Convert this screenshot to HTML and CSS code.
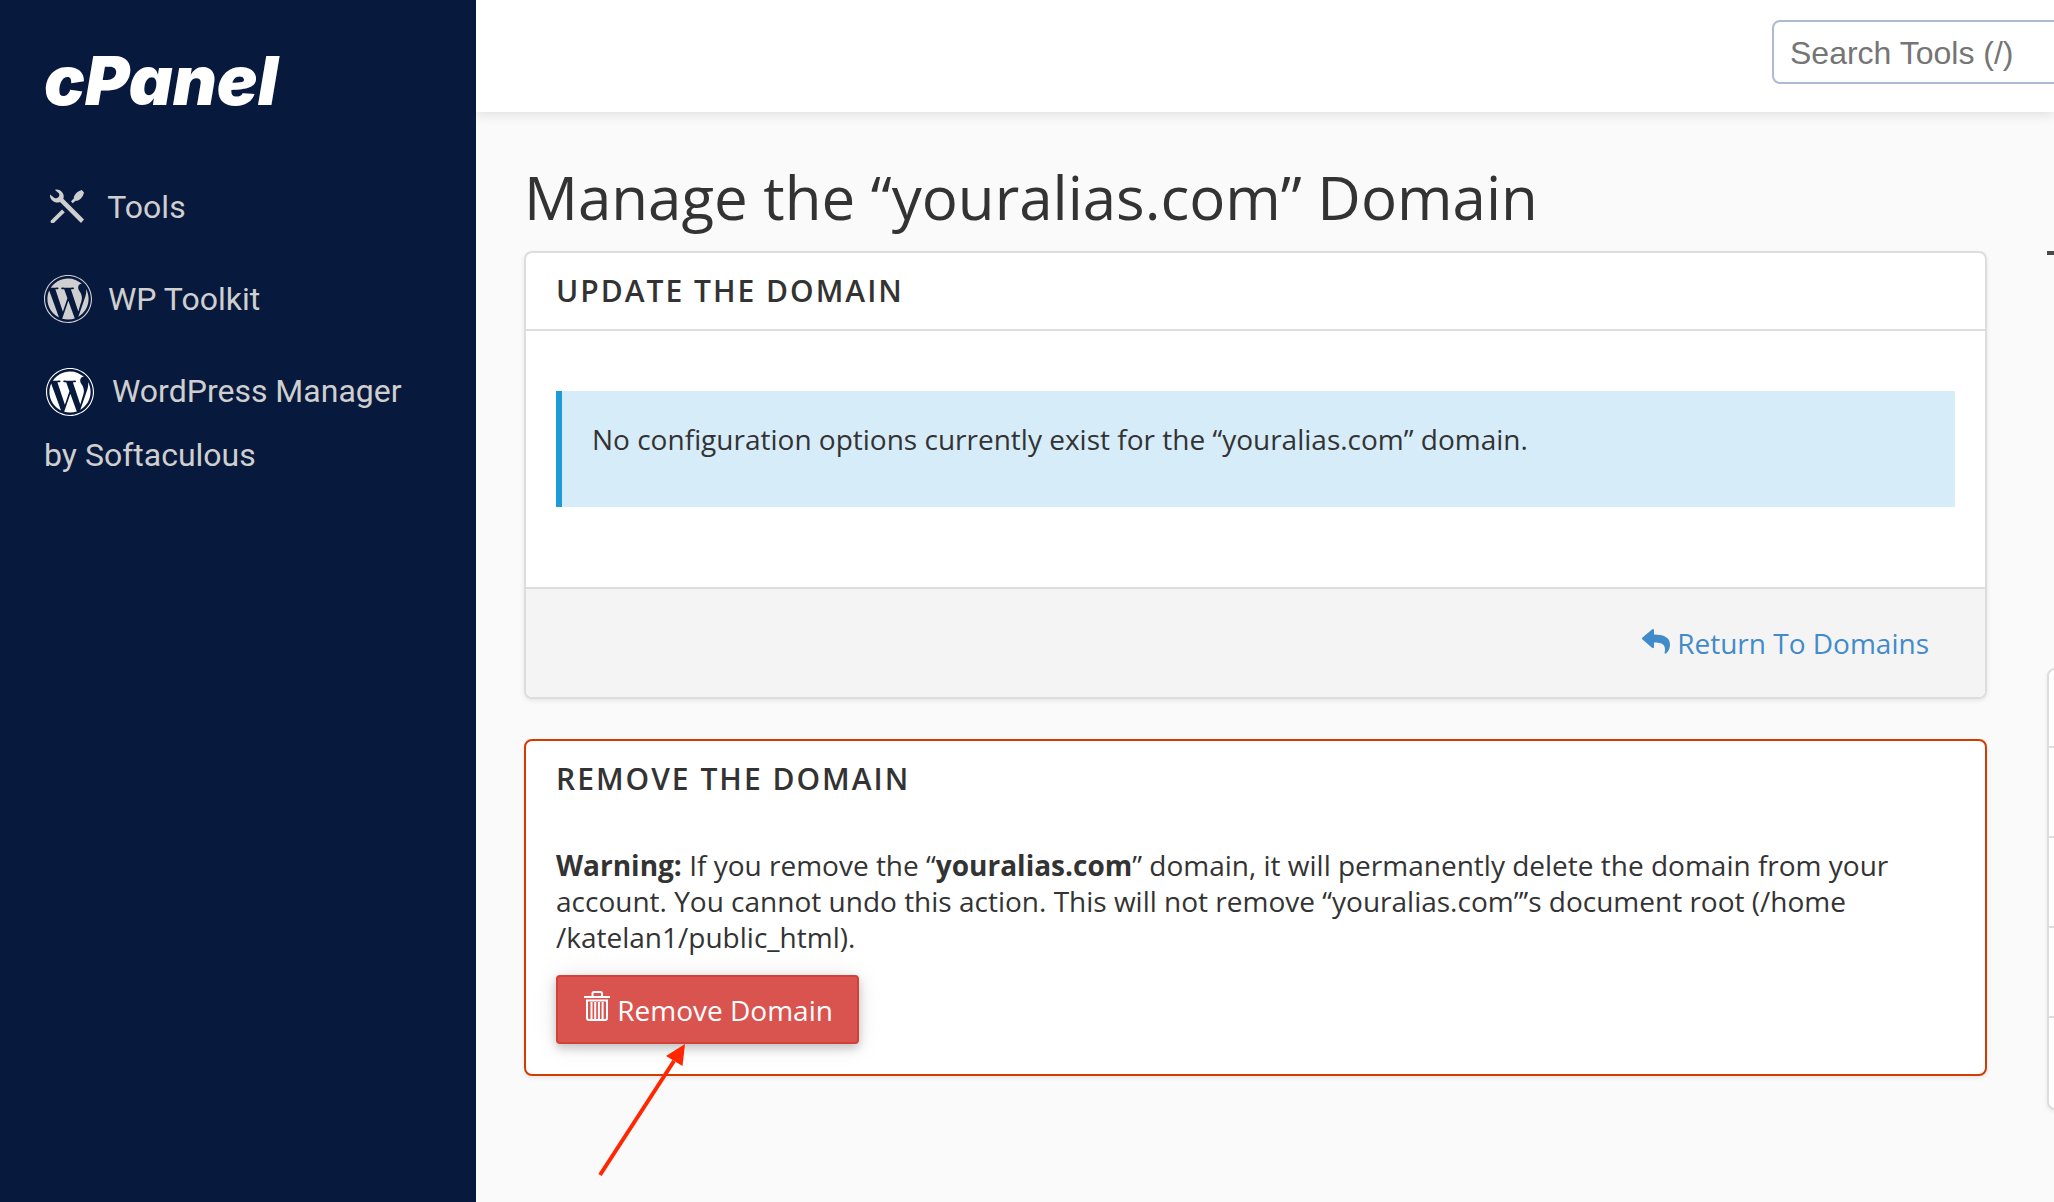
FILE: index.html
```html
<!DOCTYPE html>
<html lang="en">
<head>
	<meta charset="UTF-8">
	<meta name="viewport" content="width=device-width, initial-scale=1">
	<title>cPanel - Domains</title>
	<link rel="stylesheet" href="styles.css">
</head>
<body>
<svg class="defs" width="0" height="0" aria-hidden="true">
	<symbol id="wordpress" viewBox="8 8 496 496">
		<path d="M61.7 169.4l101.5 278C92.2 413 43.3 340.2 43.3 256c0-30.9 6.6-60.1 18.4-86.6zm337.9 75.9c0-26.3-9.4-44.5-17.5-58.7-10.8-17.5-20.9-32.4-20.9-49.9 0-19.6 14.8-37.8 35.7-37.8.9 0 1.8.1 2.8.2-37.9-34.7-88.3-55.9-143.7-55.9-74.3 0-139.7 38.1-177.8 95.9 5 .2 9.7.3 13.7.3 22.2 0 56.7-2.7 56.7-2.7 11.5-.7 12.8 16.2 1.4 17.5 0 0-11.5 1.3-24.3 2l77.5 230.4L249.8 247l-33.1-90.8c-11.5-.7-22.3-2-22.3-2-11.5-.7-10.1-18.2 1.3-17.5 0 0 35.1 2.7 56 2.7 22.2 0 56.7-2.7 56.7-2.7 11.5-.7 12.8 16.2 1.4 17.5 0 0-11.5 1.3-24.3 2l76.9 228.7 21.2-70.9c9-29.4 16-50.5 16-68.7zm-139.9 29.3l-63.8 185.5c19.1 5.6 39.2 8.7 60.1 8.7 24.8 0 48.5-4.3 70.6-12.1-.6-.9-1.1-1.9-1.5-2.9l-65.4-179.2zm183-120.7c.9 6.8 1.4 14 1.4 21.9 0 21.6-4 45.8-16.2 76.2l-65 187.9C426.2 403 468.7 334.5 468.7 256c0-37-9.4-71.8-26-102.1zM504 256c0 136.8-111.3 248-248 248C119.2 504 8 392.7 8 256 8 119.2 119.2 8 256 8c136.7 0 248 111.2 248 248zm-11.4 0c0-130.5-106.2-236.6-236.6-236.6C125.5 19.4 19.4 125.5 19.4 256S125.6 492.6 256 492.6c130.5 0 236.6-106.1 236.6-236.6z"/>
	</symbol>
</svg>

<div class="page">
	<aside class="sidebar">
		<a class="logo" href="#">cPanel</a>
		<nav class="menu">
			<a href="#">
				<svg class="icon-tools" viewBox="0 0 34 34" aria-hidden="true">
					<path d="M4.800 .8A7 7 0 0 1 13.300 9.800L34 30.600 31 34 10 13A7.300 7.300 0 0 1 0 5.500L4.500 9A3.400 3.400 0 0 0 9 4.500z"/>
					<path d="M12 20.500L14.800 23.200 3.600 34.200A2 2 0 0 1 .9 31.400z"/>
					<path d="M21 12.300L23.800 9.600C23.600 6.500 26.500 2.500 31.800 1L34 3.400C32.800 8.500 29.500 11.800 25.600 11.700L22.700 14.300z"/>
				</svg>
				Tools
			</a>
			<a href="#">
				<svg class="icon-wp" aria-hidden="true"><use href="#wordpress"/></svg>
				WP Toolkit
			</a>
			<a href="#">
				<svg class="icon-wp icon-wp-manager" aria-hidden="true"><use href="#wordpress"/></svg>
				WordPress Manager by Softaculous
			</a>
		</nav>
	</aside>

	<div class="main">
		<header class="topbar">
			<input class="search" type="search" placeholder="Search Tools (/)" aria-label="Search Tools">
		</header>

		<main class="content">
			<div class="domain">
				<h1>Manage the “youralias.com” Domain</h1>

				<section class="panel">
					<h2>Update the Domain</h2>
					<div class="panel-body">
						<p class="alert">No configuration options currently exist for the “youralias.com” domain.</p>
					</div>
					<div class="panel-footer">
						<a class="return" href="#">
							<svg class="icon-reply" viewBox="0 0 28 25" aria-hidden="true">
								<path d="M0 9.500Q0 9 .5 8.500L10 .4Q11.800-.6 12 1.200V5.500C22 5.500 28 8.500 28 15.500C28 19.500 26.500 22.500 24 24.600Q22.400 25.200 22.600 23.800C24.200 16 21 13.600 12 13.500V18Q11.800 19.800 10 18.800L.5 10.500Q0 10 0 9.500z"/>
							</svg>
							Return To Domains
						</a>
					</div>
				</section>

				<section class="panel panel-danger">
					<h2>Remove the Domain</h2>
					<div class="panel-body">
						<p class="warning"><strong>Warning:</strong> If you remove the “<strong>youralias.com</strong>” domain, it will permanently delete the domain from your account. You cannot undo this action. This will not remove “youralias.com”’s document root (/home<wbr>/katelan1/public_html).</p>
						<div class="action">
							<button class="btn-danger" type="button">
								<svg class="icon-trash" viewBox="0 0 26 30" aria-hidden="true">
									<path d="M0 6H26M8.500 5.500V2.500Q8.500 1 10 1H16.500Q18 1 18 2.500V5.500M3 9.500H23V27Q23 29 21 29H5Q3 29 3 27zM7.500 11V28M11.200 11V28M14.900 11V28M18.600 11V28"/>
								</svg>
								Remove Domain
							</button>
							<!-- arrow to the button -->
							<svg class="arrow" viewBox="0 0 90 134" aria-hidden="true">
								<path class="arrow-line" d="M4 132L78 18"/>
								<path class="arrow-head" d="M89 1L70 13 86.500 23z"/>
							</svg>
						</div>
					</div>
				</section>
			</div>

			<aside class="info">
				<hr>
				<ul class="info-list">
					<li></li>
					<li></li>
					<li></li>
					<li></li>
					<li></li>
				</ul>
			</aside>
		</main>
	</div>
</div>
</body>
</html>
```
FILE: styles.css
```css
* {
	box-sizing: border-box;
}

body {
	margin: 0;
	background: #fafafa;
	color: #333;
	font-family: "Open Sans", sans-serif;
	font-size: 28px;
	line-height: 36px;
}

a {
	text-decoration: none;
}

.defs {
	position: absolute;
}

.page {
	display: flex;
	min-height: 100vh;
}

/* sidebar */
.sidebar {
	flex: 0 0 476px;
	padding: 40px 44px;
	background: #08193e;
	font-family: Roboto, sans-serif;
}

.logo {
	display: block;
	color: #fff;
	font-family: Inter, sans-serif;
	font-size: 68px;
	font-style: italic;
	font-weight: 900;
	line-height: 80px;
}

.menu {
	display: flex;
	flex-direction: column;
	gap: 28px;
	margin-top: 55px;
}

.menu a {
	color: #cfcfcf;
	font-size: 32px;
	line-height: 64px;
}

.menu svg {
	fill: currentColor;
	vertical-align: middle;
}

.icon-tools {
	width: 34px;
	height: 34px;
	margin: 0 16px 8px 6px;
}

.icon-wp {
	width: 48px;
	height: 48px;
	margin: 0 8px 6px 0;
}

.menu .icon-wp-manager {
	margin: 0 10px 4px 2px;
	color: #fff;
}

/* top bar */
.main {
	flex: 1;
	min-width: 0;
	overflow: hidden;
}

.topbar {
	display: flex;
	justify-content: flex-end;
	height: 112px;
	padding-top: 20px;
	background: #fff;
	box-shadow: 0 2px 12px rgba(0, 0, 0, .12);
}

/* the search box runs past the right edge */
.search {
	flex: 0 0 440px;
	height: 64px;
	margin-right: -158px;
	padding: 2px 16px 0;
	border: 2px solid #aebad2;
	border-radius: 8px;
	background: #fff;
	font-family: "Liberation Sans", Arial, sans-serif;
	font-size: 32px;
	-webkit-appearance: none;
	appearance: none;
}

.topbar .search {
	margin-right: -174px;
}

.search::placeholder {
	color: #757575;
}

/* content */
.content {
	display: grid;
	grid-template-columns: minmax(0, 1fr) 480px;
	gap: 60px;
	margin-right: -473px;
	padding: 52px 0 60px 48px;
}

h1 {
	margin: 0 0 21px;
	font-size: 60px;
	font-weight: 400;
	line-height: 66px;
}

.panel {
	margin-bottom: 40px;
	border: 2px solid #ddd;
	border-radius: 8px;
	background: #fff;
	box-shadow: 0 2px 4px rgba(0, 0, 0, .08);
}

.panel h2 {
	margin: 0;
	padding: 18px 30px;
	border-bottom: 2px solid #ddd;
	font-size: 30px;
	font-weight: 600;
	letter-spacing: 2px;
	line-height: 40px;
	text-transform: uppercase;
}

.panel-body {
	padding: 30px;
}

.alert {
	margin: 30px 0 50px;
	padding: 30px 30px 50px;
	border-left: 6px solid #1c9bd7;
	background: #d7ecf9;
}

.panel-footer {
	padding: 36px 56px;
	border-top: 2px solid #ddd;
	border-radius: 0 0 6px 6px;
	background: #f4f4f4;
	text-align: right;
}

.return {
	color: #428bca;
}

.icon-reply {
	width: 28px;
	height: 25px;
	fill: currentColor;
}

.panel-danger {
	border-color: #d33c00;
}

.panel-danger h2 {
	border-bottom: 0;
}

.warning {
	margin: 0 0 20px;
}

.action {
	position: relative;
}

.btn-danger {
	display: block;
	padding: 14px 24px 14px 26px;
	border: 2px solid #d43f3a;
	border-radius: 4px;
	background: #d9534f;
	box-shadow: 0 4px 10px rgba(0, 0, 0, .2), 0 2px 24px rgba(0, 0, 0, .1);
	color: #fff;
	font: inherit;
}

.icon-trash {
	width: 26px;
	height: 30px;
	fill: none;
	stroke: currentColor;
	stroke-width: 2;
}

.arrow {
	position: absolute;
	top: 68px;
	left: 40px;
	width: 90px;
	height: 134px;
}

.arrow-line {
	fill: none;
	stroke: #ff2600;
	stroke-width: 4;
}

.arrow-head {
	fill: #ff2600;
}

/* right column */
.info {
	padding-top: 87px;
}

.info hr {
	height: 4px;
	margin: 0;
	border: 0;
	background: #4a4a4a;
}

.info-list {
	margin: 413px 0 0;
	padding: 0;
	border: 2px solid #ddd;
	border-radius: 8px;
	background: #fff;
	box-shadow: 0 2px 4px rgba(0, 0, 0, .08);
	list-style: none;
}

.info-list li {
	height: 90px;
	border-bottom: 2px solid #ddd;
}

.info-list li:first-child {
	height: 78px;
}

.info-list li:last-child {
	border-bottom: 0;
}
```
